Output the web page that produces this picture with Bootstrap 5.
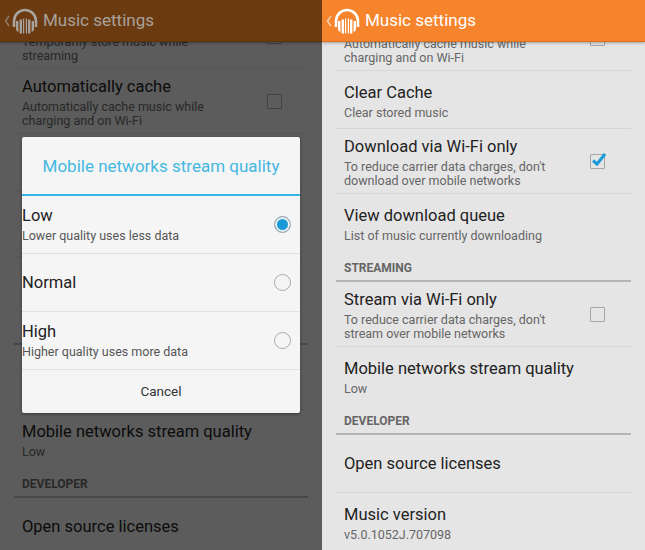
<!DOCTYPE html>
<html lang="en">
<head>
    <meta charset="UTF-8">
    <meta name="viewport" content="width=device-width, initial-scale=1.0">
    <title>Music settings</title>
    <link href="https://cdn.jsdelivr.net/npm/bootstrap@5.3.0/dist/css/bootstrap.min.css" rel="stylesheet">
    <style>
        body {
            font-family: Roboto, sans-serif;
            background-color: #e5e5e5;
            overflow: hidden;
        }

        .phone {
            height: 550px;
            background-color: #e5e5e5;
        }

        .phone-left { width: 322px; }
        .phone-right { width: 323px; }

        .app-bar {
            height: 42px;
            padding-left: 4px;
            background-color: #f6842c;
            border-bottom: 1px solid #d8701f;
            box-shadow: 0 1px 3px rgba(0, 0, 0, 0.3);
            color: #fff;
            font-size: 17px;
            z-index: 1;
        }

        .phone-left .app-bar {
            background-color: #6b3a10;
            border-bottom-color: #5c320e;
            color: #a8a29c;
        }

        .pref-scroll { min-height: 0; }
        .phone-right .pref-list { margin-top: -36px; }
        .phone-left .pref-list { margin-top: -38px; }

        .pref-list { margin-left: 14px; margin-right: 14px; }

        .pref-row {
            padding: 0 26px 0 8px;
            border-bottom: 1px solid #d6d6d6;
        }

        .row-short { height: 58px; }
        .row-tall { height: 65px; }
        .row-last { border-bottom: 0; }

        .pref-title {
            font-size: 16.5px;
            line-height: 26px;
            color: #222;
        }

        .pref-sub {
            font-size: 12.5px;
            line-height: 14px;
            color: #666;
        }

        .pref-head {
            height: 30px;
            padding: 8px 0 0 8px;
            border-bottom: 2px solid #b4b4b4;
            font-size: 12px;
            line-height: 16px;
            font-weight: 700;
            color: #666;
        }

        .box {
            width: 15px;
            height: 15px;
            border: 1.5px solid #a6a6a6;
            border-radius: 1px;
        }

        .box svg {
            position: absolute;
            left: 0;
            top: -3px;
        }

        .scrim {
            inset: 42px 0 0 0;
            background-color: rgba(0, 0, 0, 0.6);
            z-index: 2;
        }

        .stream-dialog {
            left: 22px;
            top: 137px;
            width: 278px;
            height: 276px;
            background-color: #f5f5f5;
            border-radius: 2px;
            box-shadow: 0 1px 3px rgba(0, 0, 0, 0.4);
            z-index: 3;
        }

        .dialog-title {
            height: 59px;
            padding-top: 17px;
            border-bottom: 2px solid #33b5e5;
            font-size: 17px;
            line-height: 24px;
            color: #45b8e0;
            text-align: center;
        }

        .choice {
            height: 58px;
            padding-right: 9px;
            border-bottom: 1px solid #e0e0e0;
        }

        .choice .pref-title { color: #222; }
        .choice .pref-sub { color: #555; }
        .choice-text { padding-bottom: 3px; }

        .radio {
            width: 17px;
            height: 17px;
            border: 1.5px solid #aaa;
            border-radius: 50%;
        }

        .radio-on {
            background-color: #1a9bd7;
            box-shadow: inset 0 0 0 2px #f0f0f0;
        }

        .dialog-cancel {
            height: 43px;
            font-size: 13.5px;
            color: #333;
        }

        .back-arrow { margin-right: 2px; }
        .bar-logo { margin-right: 5px; }
    </style>
</head>
<body>
    <div class="d-flex">
        <!-- Left: dialog open -->
        <div class="phone phone-left d-flex flex-column position-relative overflow-hidden">
            <div class="app-bar d-flex align-items-center flex-shrink-0 position-relative" data-bar></div>
            <div class="pref-scroll flex-grow-1 overflow-hidden">
                <div class="pref-list" data-list="left"></div>
            </div>
            <div class="scrim position-absolute"></div>

            <div class="stream-dialog position-absolute">
                <div class="dialog-title">Mobile networks stream quality</div>
                <div class="choice d-flex align-items-center justify-content-between">
                    <div class="choice-text">
                        <div class="pref-title">Low</div>
                        <div class="pref-sub">Lower quality uses less data</div>
                    </div>
                    <div class="radio radio-on"></div>
                </div>
                <div class="choice d-flex align-items-center justify-content-between">
                    <div class="pref-title">Normal</div>
                    <div class="radio"></div>
                </div>
                <div class="choice d-flex align-items-center justify-content-between">
                    <div class="choice-text">
                        <div class="pref-title">High</div>
                        <div class="pref-sub">Higher quality uses more data</div>
                    </div>
                    <div class="radio"></div>
                </div>
                <div class="dialog-cancel d-flex align-items-center justify-content-center">Cancel</div>
            </div>
        </div>

        <!-- Right: settings list -->
        <div class="phone phone-right d-flex flex-column overflow-hidden">
            <div class="app-bar d-flex align-items-center flex-shrink-0 position-relative" data-bar></div>
            <div class="pref-scroll flex-grow-1 overflow-hidden">
                <div class="pref-list" data-list="right"></div>
            </div>
        </div>
    </div>

    <script src="https://cdn.jsdelivr.net/npm/bootstrap@5.3.0/dist/js/bootstrap.bundle.min.js"></script>
    <script>
        const barHtml = `
            <svg class="back-arrow" width="6" height="12" viewBox="0 0 6 12">
                <path d="M5 1 L1.5 6 L5 11" fill="none" stroke="currentColor" stroke-width="1.6" opacity="0.6"/>
            </svg>
            <svg class="bar-logo" width="26" height="26" viewBox="0 0 26 26">
                <path d="M2 19 V13 A11 11 0 0 1 24 13 V19" fill="none" stroke="currentColor" stroke-width="2.6"/>
                <path d="M4 13 h2.4 v11 a3 3 0 0 1 -2.4 -3 z M7.6 11.5 h2.4 v14 h-2.4 z M11 10.5 h1.2 v15 h-1.2 z" fill="currentColor"/>
                <path d="M22 13 h-2.4 v11 a3 3 0 0 0 2.4 -3 z M18.4 11.5 h-2.4 v14 h2.4 z M15 10.5 h-1.2 v15 h1.2 z" fill="currentColor"/>
            </svg>
            <span>Music settings</span>`;

        const checkMark = `<svg width="15" height="15" viewBox="0 0 15 15">
            <path d="M2 8.5 L6 12 L14 2" fill="none" stroke="#1a9bd7" stroke-width="3"/>
        </svg>`;

        const autoCache = { title: 'Automatically cache', sub: ['Automatically cache music while', 'charging and on Wi-Fi'], box: 'off' };
        const rows = [
            autoCache,
            { title: 'Clear Cache', sub: ['Clear stored music'] },
            { title: 'Download via Wi-Fi only', sub: ["To reduce carrier data charges, don't", 'download over mobile networks'], box: 'on' },
            { title: 'View download queue', sub: ['List of music currently downloading'], last: true },
            { head: 'STREAMING' },
            { title: 'Stream via Wi-Fi only', sub: ["To reduce carrier data charges, don't", 'stream over mobile networks'], box: 'off' },
            { title: 'Mobile networks stream quality', sub: ['Low'], last: true },
            { head: 'DEVELOPER' },
            { title: 'Open source licenses' },
            { title: 'Music version', sub: ['v5.0.1052J.707098'], last: true }
        ];
        const leftRows = [
            { title: 'Cache while streaming', sub: ['Temporarily store music while', 'streaming'], box: 'off' },
            ...rows
        ];

        function rowHtml(row) {
            if (row.head) return `<div class="pref-head">${row.head}</div>`;
            const sub = row.sub || [];
            const box = row.box
                ? `<div class="box position-relative flex-shrink-0">${row.box === 'on' ? checkMark : ''}</div>`
                : '';
            return `
                <div class="pref-row ${sub.length > 1 ? 'row-tall' : 'row-short'} ${row.last ? 'row-last' : ''} d-flex align-items-center justify-content-between">
                    <div>
                        <div class="pref-title">${row.title}</div>
                        ${sub.map(line => `<div class="pref-sub">${line}</div>`).join('')}
                    </div>
                    ${box}
                </div>`;
        }

        document.querySelectorAll('[data-bar]').forEach(bar => bar.innerHTML = barHtml);
        document.querySelector('[data-list="left"]').innerHTML = leftRows.map(rowHtml).join('');
        document.querySelector('[data-list="right"]').innerHTML = rows.map(rowHtml).join('');
    </script>
</body>
</html>
